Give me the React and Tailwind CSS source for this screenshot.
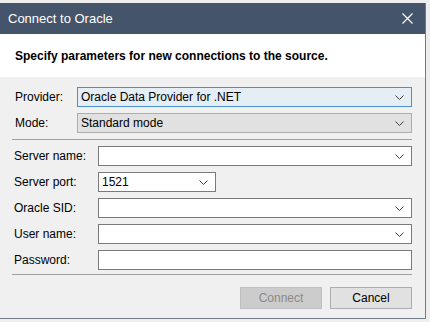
import React from "react";

const Chevron = () => (
  <svg width="9" height="5" viewBox="0 0 9 5" className="shrink-0">
    <path d="M0.5 0.5 L4.5 4.5 L8.5 0.5" fill="none" stroke="#404040" strokeWidth="1" />
  </svg>
);

function Select({ value, variant = "white", className = "" }) {
  const styles =
    variant === "focus"
      ? "bg-[#e5edf5] border-[#4a90d0]"
      : variant === "gray"
      ? "bg-[#e1e1e1] border-[#adadad]"
      : "bg-white border-[#7a7a7a]";
  return (
    <div className={`h-[20px] border flex items-center justify-between pl-[3px] pr-[7px] ${styles} ${className}`}>
      <span className="text-[12px] text-black leading-none">{value}</span>
      <Chevron />
    </div>
  );
}

function Label({ children, w }) {
  return <div className={`text-[12px] text-black leading-none shrink-0 ${w}`}>{children}</div>;
}

export default function App() {
  return (
    <div
      className="w-[430px] h-[322px] bg-[#eeeeee] pt-[3px] overflow-hidden"
      style={{ fontFamily: '"Liberation Sans", Arial, sans-serif' }}
    >
      <div className="w-[426px] h-[316px] flex flex-col border-r border-b border-[#707a88]">
        <div className="h-[31px] bg-[#44546a] flex items-center justify-between pl-[8px] pr-[12px] shrink-0">
          <span className="text-white text-[13px]">Connect to Oracle</span>
          <svg width="11" height="11" viewBox="0 0 11 11">
            <path d="M0.5 0.5 L10.5 10.5 M10.5 0.5 L0.5 10.5" stroke="white" strokeWidth="1.2" />
          </svg>
        </div>
        <div className="h-[43px] bg-white flex items-center pl-[15px] shrink-0">
          <span className="text-[12px] font-bold text-black">Specify parameters for new connections to the source.</span>
        </div>
        <div className="flex-1 bg-[#f0f0f0] flex flex-col pl-[12px] pr-[13px] pt-[10px]">
          <div className="flex items-center pl-[3px]">
            <Label w="w-[62px]">Provider:</Label>
            <Select value="Oracle Data Provider for .NET" variant="focus" className="flex-1" />
          </div>
          <div className="flex items-center pl-[3px] mt-[6px]">
            <Label w="w-[62px]">Mode:</Label>
            <Select value="Standard mode" variant="gray" className="flex-1" />
          </div>
          <div className="h-px bg-[#a0a0a0] mt-[6px]" />
          <div className="flex flex-col gap-[6px] mt-[6px] pl-[2px]">
            <div className="flex items-center">
              <Label w="w-[84px]">Server name:</Label>
              <Select value="" className="flex-1" />
            </div>
            <div className="flex items-center">
              <Label w="w-[84px]">Server port:</Label>
              <Select value="1521" className="w-[118px]" />
            </div>
            <div className="flex items-center">
              <Label w="w-[84px]">Oracle SID:</Label>
              <Select value="" className="flex-1" />
            </div>
            <div className="flex items-center">
              <Label w="w-[84px]">User name:</Label>
              <Select value="" className="flex-1" />
            </div>
            <div className="flex items-center">
              <Label w="w-[84px]">Password:</Label>
              <div className="flex-1 h-[20px] bg-white border border-[#7a7a7a]" />
            </div>
          </div>
          <div className="h-px bg-[#a0a0a0] mt-[4px]" />
          <div className="flex justify-end gap-[8px] mt-[12px]">
            <div className="w-[82px] h-[22px] bg-[#cccccc] border border-[#bfbfbf] flex items-center justify-center text-[12px] text-[#8a8a8a]">
              Connect
            </div>
            <div className="w-[82px] h-[22px] bg-[#e1e1e1] border border-[#adadad] flex items-center justify-center text-[12px] text-black">
              Cancel
            </div>
          </div>
        </div>
      </div>
    </div>
  );
}
